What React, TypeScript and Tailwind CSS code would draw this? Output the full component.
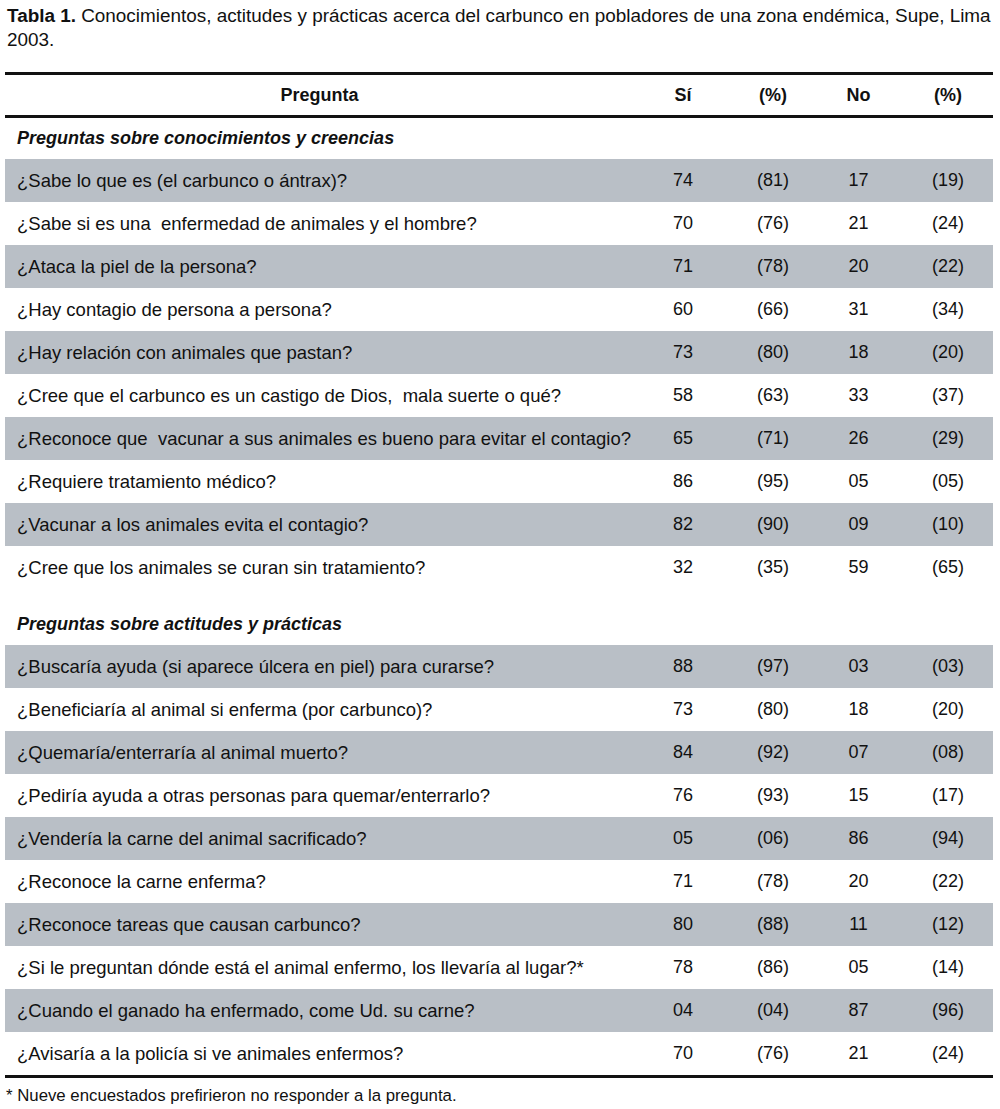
import React from "react";

type Row = { q: string; si: string; sip: string; no: string; nop: string };

const conocimientos: Row[] = [
  { q: "¿Sabe lo que es (el carbunco o ántrax)?", si: "74", sip: "(81)", no: "17", nop: "(19)" },
  { q: "¿Sabe si es una  enfermedad de animales y el hombre?", si: "70", sip: "(76)", no: "21", nop: "(24)" },
  { q: "¿Ataca la piel de la persona?", si: "71", sip: "(78)", no: "20", nop: "(22)" },
  { q: "¿Hay contagio de persona a persona?", si: "60", sip: "(66)", no: "31", nop: "(34)" },
  { q: "¿Hay relación con animales que pastan?", si: "73", sip: "(80)", no: "18", nop: "(20)" },
  { q: "¿Cree que el carbunco es un castigo de Dios,  mala suerte o qué?", si: "58", sip: "(63)", no: "33", nop: "(37)" },
  { q: "¿Reconoce que  vacunar a sus animales es bueno para evitar el contagio?", si: "65", sip: "(71)", no: "26", nop: "(29)" },
  { q: "¿Requiere tratamiento médico?", si: "86", sip: "(95)", no: "05", nop: "(05)" },
  { q: "¿Vacunar a los animales evita el contagio?", si: "82", sip: "(90)", no: "09", nop: "(10)" },
  { q: "¿Cree que los animales se curan sin tratamiento?", si: "32", sip: "(35)", no: "59", nop: "(65)" },
];

const actitudes: Row[] = [
  { q: "¿Buscaría ayuda (si aparece úlcera en piel) para curarse?", si: "88", sip: "(97)", no: "03", nop: "(03)" },
  { q: "¿Beneficiaría al animal si enferma (por carbunco)?", si: "73", sip: "(80)", no: "18", nop: "(20)" },
  { q: "¿Quemaría/enterraría al animal muerto?", si: "84", sip: "(92)", no: "07", nop: "(08)" },
  { q: "¿Pediría ayuda a otras personas para quemar/enterrarlo?", si: "76", sip: "(93)", no: "15", nop: "(17)" },
  { q: "¿Vendería la carne del animal sacrificado?", si: "05", sip: "(06)", no: "86", nop: "(94)" },
  { q: "¿Reconoce la carne enferma?", si: "71", sip: "(78)", no: "20", nop: "(22)" },
  { q: "¿Reconoce tareas que causan carbunco?", si: "80", sip: "(88)", no: "11", nop: "(12)" },
  { q: "¿Si le preguntan dónde está el animal enfermo, los llevaría al lugar?*", si: "78", sip: "(86)", no: "05", nop: "(14)" },
  { q: "¿Cuando el ganado ha enfermado, come Ud. su carne?", si: "04", sip: "(04)", no: "87", nop: "(96)" },
  { q: "¿Avisaría a la policía si ve animales enfermos?", si: "70", sip: "(76)", no: "21", nop: "(24)" },
];

const cols = "grid grid-cols-[629px_98px_82px_89px_90px]";

const DataRows = ({ rows }: { rows: Row[] }) => (
  <>
    {rows.map((r, i) => (
      <div
        key={r.q}
        className={`${cols} h-[43px] items-center ${i % 2 === 0 ? "bg-[#b9bfc6]" : "bg-white"}`}
      >
        <div className="pl-[12px] whitespace-pre text-[18.5px]">{r.q}</div>
        <div className="text-center">{r.si}</div>
        <div className="text-center">{r.sip}</div>
        <div className="text-center">{r.no}</div>
        <div className="text-center">{r.nop}</div>
      </div>
    ))}
  </>
);

export default function App() {
  return (
    <div className="w-[1000px] bg-white px-[5px] text-[#111] font-['Liberation_Sans',Arial,sans-serif]">
      <p className="w-[992px] pt-[4px] pl-[2px] text-[18.9px] leading-[24px]">
        <span className="font-bold">Tabla 1.</span> Conocimientos, actitudes y prácticas acerca del carbunco en pobladores de una zona endémica, Supe, Lima 2003.
      </p>

      <div className="mt-[20px] w-[988px] text-[18px]">
        <div className="h-[3px] bg-[#111]" />
        <div className={`${cols} h-[40px] items-center font-bold`}>
          <div className="text-center">Pregunta</div>
          <div className="text-center">Sí</div>
          <div className="text-center">(%)</div>
          <div className="text-center">No</div>
          <div className="text-center">(%)</div>
        </div>
        <div className="h-[3px] bg-[#111]" />

        <div className="flex h-[41px] items-center pl-[12px] font-bold italic">
          Preguntas sobre conocimientos y creencias
        </div>
        <DataRows rows={conocimientos} />

        <div className="flex h-[42px] mt-[14px] items-center pl-[12px] font-bold italic">
          Preguntas sobre actitudes y prácticas
        </div>
        <DataRows rows={actitudes} />
        <div className="h-[3px] bg-[#111]" />
      </div>

      <p className="mt-[8px] pl-[1px] text-[16.8px] leading-[20px] pb-[4px]">
        * Nueve encuestados prefirieron no responder a la pregunta.
      </p>
    </div>
  );
}
